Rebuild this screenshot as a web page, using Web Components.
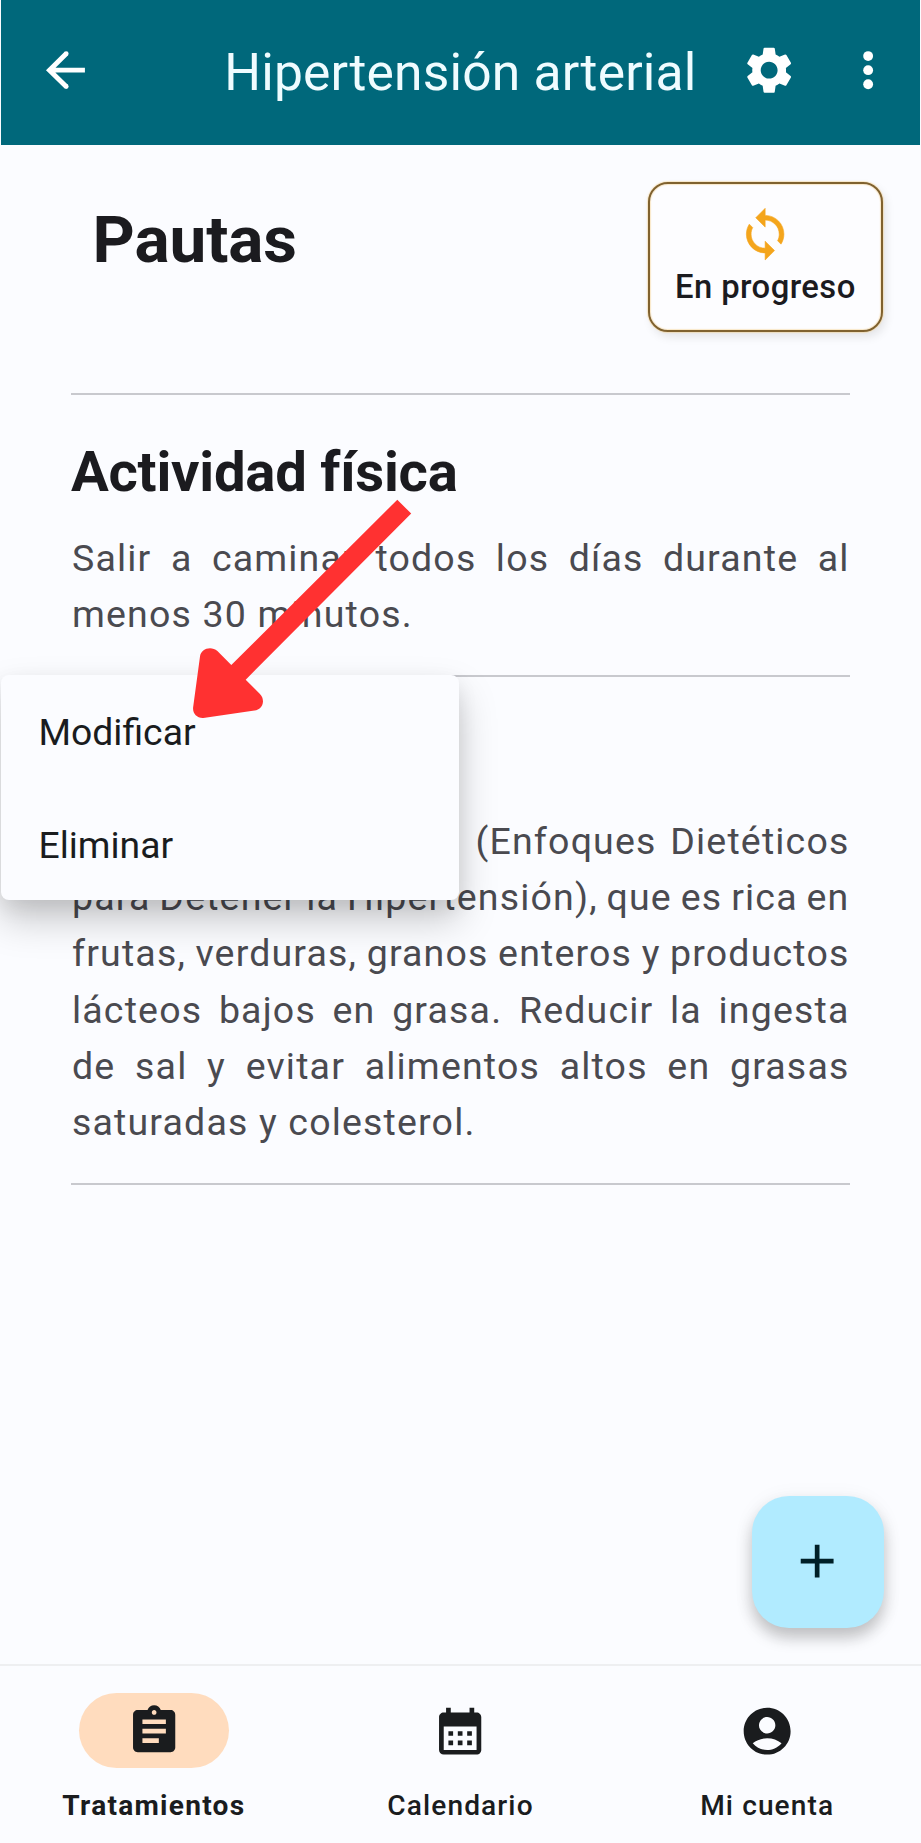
<!DOCTYPE html>
<html lang="es">
<head>
<meta charset="utf-8">
<title>Hipertensión arterial</title>
<style>
html,body{margin:0;padding:0;background:#fbfcff}
body{width:921px;height:1843px;overflow:hidden;font-family:Roboto,sans-serif;color:#1b1b1f}
</style>
</head>
<body>
<treatment-screen></treatment-screen>
<script>
const ICONS={
back:'<path d="M20 12H5M12 5 4.9 12 12 19" fill="none" stroke="currentColor" stroke-width="2.1" stroke-linejoin="miter"/><circle cx="12" cy="5" r="1.05" /><circle cx="12" cy="19" r="1.05"/>',
gear:'<path d="M19.14 12.94c.04-.3.06-.61.06-.94 0-.32-.02-.64-.07-.94l2.03-1.58c.18-.14.23-.41.12-.61l-1.92-3.32c-.12-.22-.37-.29-.59-.22l-2.39.96c-.5-.38-1.03-.7-1.62-.94l-.36-2.54c-.04-.24-.24-.41-.48-.41h-3.84c-.24 0-.43.17-.47.41l-.36 2.54c-.59.24-1.13.57-1.62.94l-2.39-.96c-.22-.08-.47 0-.59.22L2.74 8.87c-.12.21-.08.47.12.61l2.03 1.58c-.05.3-.09.63-.09.94s.02.64.07.94l-2.03 1.58c-.18.14-.23.41-.12.61l1.92 3.32c.12.22.37.29.59.22l2.39-.96c.5.38 1.03.7 1.62.94l.36 2.54c.05.24.24.41.48.41h3.84c.24 0 .44-.17.47-.41l.36-2.54c.59-.24 1.13-.56 1.62-.94l2.39.96c.22.08.47 0 .59-.22l1.92-3.32c.12-.22.07-.47-.12-.61l-2.01-1.58zM12 15.6c-1.98 0-3.6-1.62-3.6-3.6s1.62-3.6 3.6-3.6 3.6 1.62 3.6 3.6-1.62 3.6-3.6 3.6z"/>',
more:'<circle cx="12" cy="6" r="2.1"/><circle cx="12" cy="12" r="2.1"/><circle cx="12" cy="18" r="2.1"/>',
sync:'<path d="M12 4V1L8 5l4 4V6c3.31 0 6 2.69 6 6 0 1.01-.25 1.97-.7 2.8l1.46 1.46C19.54 15.03 20 13.57 20 12c0-4.42-3.58-8-8-8zm0 14c-3.31 0-6-2.69-6-6 0-1.01.25-1.97.7-2.8L5.24 7.74C4.46 8.97 4 10.43 4 12c0 4.42 3.58 8 8 8v3l4-4-4-4v3z" stroke="currentColor" stroke-width=".25"/>',
plus:'<path d="M19 13h-6v6h-2v-6H5v-2h6V5h2v6h6v2z"/>',
clipboard:'<path d="M19 3h-4.18C14.4 1.84 13.3 1 12 1c-1.3 0-2.4.84-2.82 2H5c-1.1 0-2 .9-2 2v14c0 1.1.9 2 2 2h14c1.1 0 2-.9 2-2V5c0-1.1-.9-2-2-2zm-7 0c.55 0 1 .45 1 1s-.45 1-1 1-1-.45-1-1 .45-1 1-1zm2 14H7v-2h7v2zm3-4H7v-2h10v2zm0-4H7V7h10v2z"/>',
calendar:'<path d="M19 4h-1V2h-2v2H8V2H6v2H5c-1.11 0-1.99.9-1.99 2L3 20a2 2 0 0 0 2 2h14c1.1 0 2-.9 2-2V6c0-1.1-.9-2-2-2zm0 16H5V10h14v10zM9 14H7v-2h2v2zm4 0h-2v-2h2v2zm4 0h-2v-2h2v2zm-8 4H7v-2h2v2zm4 0h-2v-2h2v2zm4 0h-2v-2h2v2z"/>',
account:'<path d="M12 2C6.48 2 2 6.48 2 12s4.48 10 10 10 10-4.48 10-10S17.52 2 12 2zm0 4c1.93 0 3.5 1.57 3.5 3.5S13.93 13 12 13s-3.5-1.57-3.5-3.5S10.07 6 12 6zm0 14c-2.03 0-4.43-.82-6.14-2.88C7.55 15.8 9.68 15 12 15s4.45.8 6.14 2.12C16.43 19.18 14.03 20 12 20z"/>'
};
function define(name,render){
  customElements.define(name,class extends HTMLElement{
    constructor(){super();this.attachShadow({mode:'open'});}
    connectedCallback(){this.shadowRoot.innerHTML=render(this);}
  });
}
define('m-icon',el=>`<style>:host{display:block;width:56.3px;height:56.3px;flex:none}svg{display:block;width:100%;height:100%;fill:currentColor}</style><svg viewBox="0 0 24 24">${ICONS[el.getAttribute('name')]}</svg>`);

define('app-bar',()=>`<style>
:host{display:grid;grid-template-columns:56px 1fr 56px 102px;align-items:center;box-sizing:border-box;height:144.5px;margin:0 1px;padding:0 21px 4px 36.8px;background:#00687b;color:#fff}
h1{margin:6px 44.5px 0 0;text-align:right;font-size:51.6px;line-height:66px;font-weight:400;letter-spacing:.17px;white-space:nowrap;color:#effcff}
.more{justify-self:end;margin-right:2.5px}
</style><m-icon name="back"></m-icon><h1><slot></slot></h1><m-icon name="gear"></m-icon><m-icon class="more" name="more"></m-icon>`);

define('status-button',()=>`<style>
:host{display:flex;flex-direction:column;align-items:center;box-sizing:border-box;width:235px;height:149.5px;padding-top:22.3px;border:2.6px solid #80622f;border-radius:20px;background:#fdfdff;box-shadow:0 0 1px 1px #f6cf8a77,inset 0 0 1px 1px #f6cf8a77,3px 5px 10px #00000018}
m-icon{color:#f4a51c}
span{font-size:32.8px;font-weight:500;line-height:47px;letter-spacing:.42px;margin-top:1.6px;white-space:nowrap}
</style><m-icon name="sync"></m-icon><span><slot></slot></span>`);

define('guideline-item',()=>`<style>
:host{display:block;border-bottom:2px solid #c8c9ce;padding:40.4px 0 32.6px}
.h{height:75px;line-height:75px;font-size:56.3px;font-weight:700;letter-spacing:-.27px;white-space:nowrap}
.t{margin:20px .5px 0 1px;font-size:37.5px;line-height:56.27px;letter-spacing:1.17px;color:#4a4a50}
</style><div class="h"><slot name="title"></slot></div><div class="t"><slot></slot></div>`);

define('text-line',()=>`<style>
:host{display:block;white-space:nowrap;text-align:justify;text-align-last:justify;word-spacing:-2px;margin-left:var(--lead,0)}
:host([last]){text-align-last:left;word-spacing:0}
</style><slot></slot>`);

define('context-menu',()=>`<style>
:host{display:block;position:absolute;left:1px;top:675px;width:458px;height:224.6px;border-radius:8px;background:#fbfcff;box-shadow:0 20px 38px #00000034,0 8px 20px #00000014}
</style><slot></slot>`);
define('menu-option',()=>`<style>
:host{display:block;height:112.5px;line-height:114px;padding-left:37.5px;font-size:37.3px;color:#1a1c1e;letter-spacing:0}
</style><slot></slot>`);

define('pointer-arrow',()=>`<style>
:host{display:block;position:absolute;left:190px;top:495px;width:225px;height:228px}
svg{display:block}
</style><svg width="225" height="228" viewBox="190 495 225 228"><path fill="#ff3131" d="M397.3 499.7 411.2 513.6 245.7 679.7 259.7 693.7Q263 697 263 701.5C262.5 707 259.5 709.8 254.5 710.5L203.3 717.9C196.8 718.2 192.6 713.5 193.1 707.5L200 656.5C200.7 648.8 211 645.2 217.4 651L231.3 665Z"/></svg>`);

define('fab-button',()=>`<style>
:host{display:flex;align-items:center;justify-content:center;position:absolute;left:751.5px;top:1495.6px;width:132px;height:132px;border-radius:37px;background:#b1ebff;color:#001f27;box-shadow:0 10px 15px #00000036,0 3px 22px #0000000f}
</style><m-icon name="plus"></m-icon>`);

define('nav-item',el=>`<style>
:host{display:flex;flex-direction:column;align-items:center;flex:1;padding-top:25.5px;color:#1a1c1e}
.p{display:flex;align-items:center;justify-content:center;box-sizing:border-box;padding-top:1px;width:150px;height:75.5px;border-radius:38px;background:${el.hasAttribute('active')?'#ffdcbe':'none'}}
span{margin-top:18.6px;font-size:28.1px;line-height:38px;letter-spacing:${el.hasAttribute('active')?1.25:1.1}px;font-weight:${el.hasAttribute('active')?700:500};white-space:nowrap}
</style><div class="p"><m-icon name="${el.getAttribute('icon')}"></m-icon></div><span><slot></slot></span>`);
define('nav-bar',()=>`<style>
:host{display:flex;box-sizing:border-box;height:178.8px;padding:1px .5px 0 .5px;border-top:2.4px solid #eeeff1}
</style><slot></slot>`);

define('treatment-screen',()=>`<style>
:host{display:flex;flex-direction:column;position:relative;width:921px;height:1843px;background:#fbfcff;overflow:hidden}
main{flex:1}
.head{display:flex;justify-content:space-between;align-items:flex-start;height:210.3px;padding:37.5px 38.2px 0 92.5px;box-sizing:border-box}
h2{margin:20px 0 0;font-size:65.7px;line-height:76px;font-weight:700;letter-spacing:-.1px}
.list{margin:38px 71px 0;border-top:2px solid #c8c9ce}
.lead{--lead:403.5px}
</style>
<app-bar>Hipertensión arterial</app-bar>
<main>
<div class="head"><h2>Pautas</h2><status-button>En progreso</status-button></div>
<div class="list">
<guideline-item><span slot="title">Actividad física</span><text-line>Salir a caminar todos los días durante al</text-line><text-line last>menos 30 minutos.</text-line></guideline-item>
<guideline-item><text-line class="lead">(Enfoques Dietéticos</text-line><text-line>para Detener la Hipertensión), que es rica en</text-line><text-line>frutas, verduras, granos enteros y productos</text-line><text-line>lácteos bajos en grasa. Reducir la ingesta</text-line><text-line>de sal y evitar alimentos altos en grasas</text-line><text-line last>saturadas y colesterol.</text-line></guideline-item>
</div>
</main>
<nav-bar><nav-item icon="clipboard" active>Tratamientos</nav-item><nav-item icon="calendar">Calendario</nav-item><nav-item icon="account">Mi cuenta</nav-item></nav-bar>
<context-menu><menu-option>Modificar</menu-option><menu-option>Eliminar</menu-option></context-menu>
<pointer-arrow></pointer-arrow>
<fab-button></fab-button>`);
</script>
</body>
</html>
